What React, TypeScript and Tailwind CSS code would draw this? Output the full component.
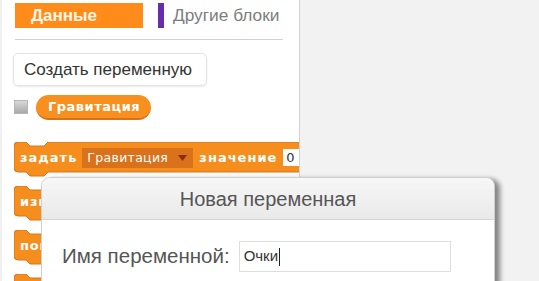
import React from "react";

function BlockShape({ w, color = "#f58e1c", stroke = "#d9761a" }: { w: number; color?: string; stroke?: string }) {
  const h = 30;
  const d = `M0,4 Q0,0 4,0 L12,0 L16,4 L30,4 L34,0 L${w - 4},0 Q${w},0 ${w},4 L${w},${h - 4} Q${w},${h} ${w - 4},${h} L34,${h} L30,${h + 4} L16,${h + 4} L12,${h} L4,${h} Q0,${h} 0,${h - 4} Z`;
  return (
    <svg className="absolute left-0 top-0" width={w + 1} height={h + 6} viewBox={`0 0 ${w + 1} ${h + 6}`}>
      <path d={d} fill={color} stroke={stroke} strokeWidth="1" />
    </svg>
  );
}

function Block({ w, children }: { w: number; children?: React.ReactNode }) {
  return (
    <div className="relative h-[30px] shrink-0" style={{ width: w }}>
      <BlockShape w={w} />
      <div
        className="relative flex h-[30px] items-center gap-[5px] pl-[6px] pt-[2px] text-[13px] font-bold text-white"
        style={{ fontFamily: '"DejaVu Sans", sans-serif' }}
      >
        {children}
      </div>
    </div>
  );
}

export default function App() {
  return (
    <div
      className="relative flex h-[281px] w-[539px] overflow-hidden bg-[#f2f2f2]"
      style={{ fontFamily: '"Liberation Sans", Arial, sans-serif' }}
    >
      {/* Left palette */}
      <div className="flex h-[281px] w-[300px] shrink-0 flex-col overflow-hidden border-r border-l-[2px] border-r-[#d3d3d3] border-l-[#f0f0f0] bg-white">
        <div className="flex shrink-0 items-center pl-[13px] pt-[3px]">
          <div className="flex h-[25px] w-[128px] items-center bg-[#ff8c1a] pl-[16px] text-[17px] font-bold text-[#fff6e6]">
            Данные
          </div>
          <div className="ml-[15px] h-[25px] w-[6px] bg-[#6a2ca8]" />
          <div className="ml-[9px] text-[17.3px] text-[#7d7d7d]">Другие блоки</div>
        </div>
        <div className="ml-[13px] mt-[10px] h-[1px] w-[268px] shrink-0 bg-[#cdd3dc]" />
        <div className="ml-[11px] mt-[13px] flex h-[33px] w-[194px] shrink-0 items-center rounded-[5px] border border-[#e2e2e2] pl-[10px] text-[17px] text-[#333] shadow-[0_1px_2px_rgba(0,0,0,0.08)]">
          Создать переменную
        </div>
        <div className="ml-[12px] mt-[9px] flex shrink-0 items-center">
          <div className="h-[14px] w-[14px] border border-[#b5b5b5] bg-gradient-to-b from-[#d8d8d8] to-[#a9a9a9]" />
          <div
            className="ml-[8px] flex h-[25px] w-[115px] items-center rounded-full border-b-2 border-[#d8711a] bg-[#f7901e] pl-[12px] text-[13px] font-bold tracking-[0.5px] text-white"
            style={{ fontFamily: '"DejaVu Sans", sans-serif' }}
          >
            Гравитация
          </div>
        </div>
        <div className="ml-[12px] mt-[22px] flex shrink-0 flex-col gap-[14px]">
          <Block w={300}>
            <span className="tracking-[1px]">задать</span>
            <span className="flex h-[20px] w-[111px] items-center justify-between bg-[#d9721a] pl-[5px] pr-[6px] text-[12.5px] font-normal tracking-[0.3px]">
              <span>Гравитация</span>
              <svg width="9" height="6" viewBox="0 0 9 6">
                <path d="M0,0 L9,0 L4.5,6 Z" fill="#8b2d0d" />
              </svg>
            </span>
            <span className="ml-[1px] tracking-[1px]">значение</span>
            <span className="ml-[1px] flex h-[17px] w-[20px] items-center bg-white pl-[3px] font-normal text-[#333]">0</span>
          </Block>
          <Block w={150}>
            <span className="tracking-[0.8px]">изменить</span>
          </Block>
          <Block w={150}>
            <span className="tracking-[0.8px]">показать</span>
          </Block>
          <Block w={150}>
            <span className="tracking-[0.8px]">скрыть</span>
          </Block>
        </div>
      </div>
      <div className="flex-1" />

      {/* Dialog overlay */}
      <div className="absolute left-[41px] top-[177px] h-[120px] w-[454px] rounded-t-[9px] border border-[#cfcfcf] bg-white shadow-[5px_2px_5px_rgba(0,0,0,0.45)]">
        <div className="flex h-[42px] items-center justify-center rounded-t-[9px] border-b border-[#d6d6d6] bg-gradient-to-b from-[#f7f7f7] to-[#e9e9e9] text-[20px] text-[#555]">
          Новая переменная
        </div>
        <div className="flex items-center pl-[20px] pt-[21px]">
          <span className="text-[20.5px] text-[#555]">Имя переменной:</span>
          <div className="ml-[9px] flex h-[31px] w-[212px] items-center border border-[#dedede] pl-[4px] text-[15px] text-[#333]">
            Очки<span className="ml-[1px] inline-block h-[18px] w-[1px] bg-[#222]" />
          </div>
        </div>
      </div>
    </div>
  );
}
